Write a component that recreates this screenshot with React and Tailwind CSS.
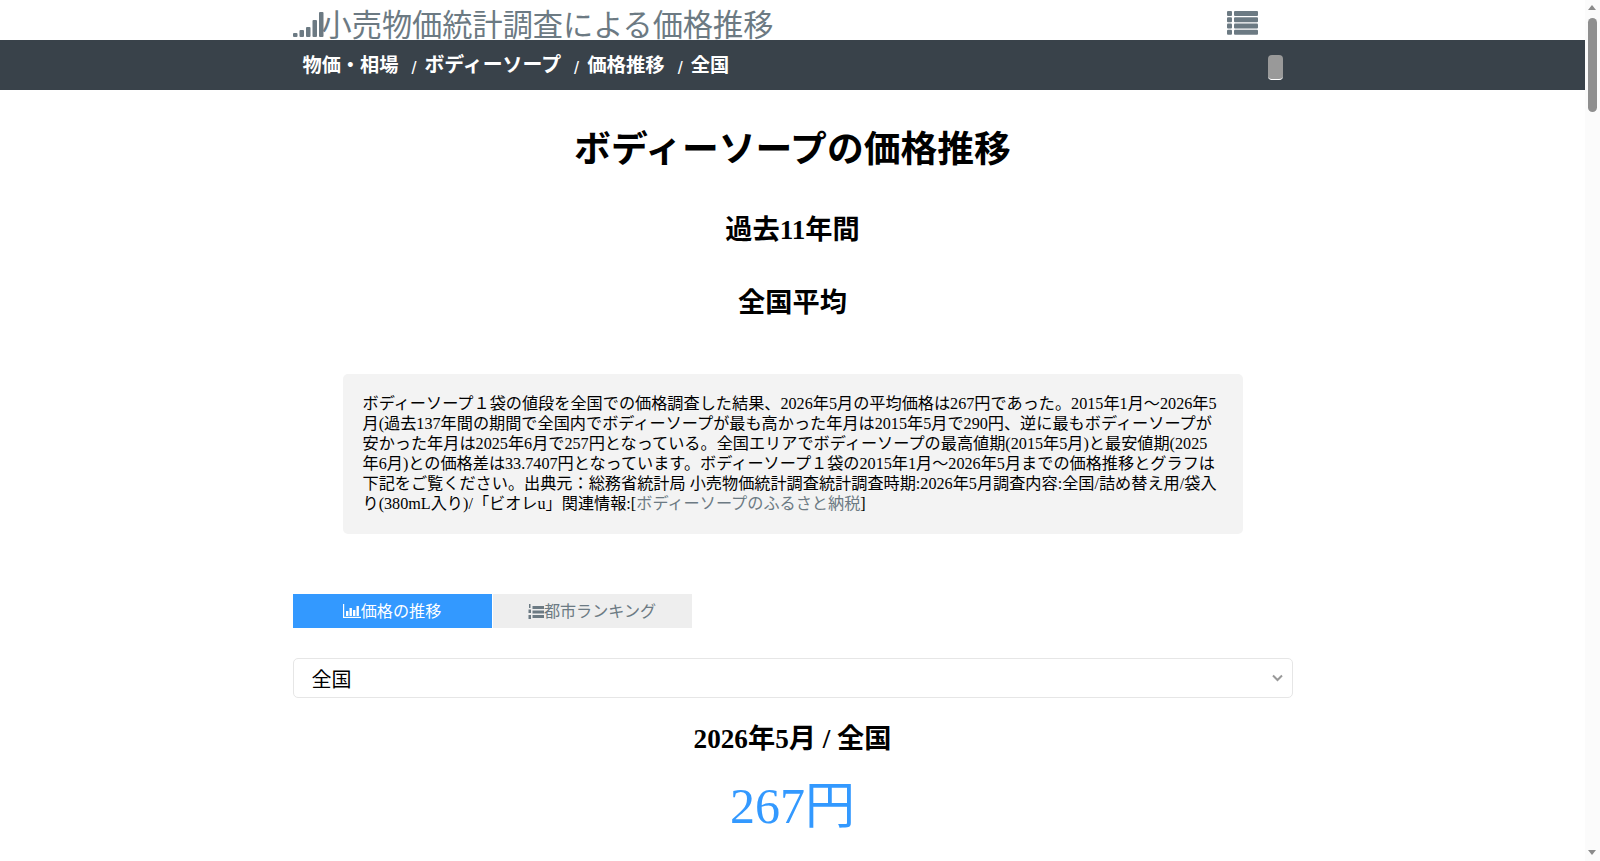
const Sep = () => <span className="text-[18px] font-normal pl-[13px] pr-[8px] relative top-[2px]">/</span>;

const Signal = () => (
  <svg width="31" height="25" viewBox="0 0 31 25" fill="#6c7a83">
    <rect x="0" y="21" width="4.5" height="4" rx="1" />
    <rect x="6.5" y="18" width="4.5" height="7" rx="1" />
    <rect x="13" y="15" width="4.5" height="10" rx="1" />
    <rect x="19.5" y="8" width="4.5" height="17" rx="1" />
    <rect x="26" y="0" width="4.5" height="25" rx="1" />
  </svg>
);

const ListIcon = () => (
  <svg width="31" height="25" viewBox="0 0 31 25" fill="#6c7a83">
    {[0, 6.25, 12.5, 18.75].map((y) => (
      <g key={y}>
        <rect x="0" y={y} width="5" height="5" rx="1" />
        <rect x="7" y={y} width="24" height="5" rx="1" />
      </g>
    ))}
  </svg>
);

const BarIcon = () => (
  <svg width="18" height="14" viewBox="0 0 18 14" fill="#fff">
    <rect x="0" y="0" width="1.2" height="14" />
    <rect x="0" y="12.8" width="18" height="1.2" />
    <rect x="3" y="7" width="2.4" height="5" />
    <rect x="6.5" y="4" width="2.4" height="8" />
    <rect x="10" y="6" width="2.4" height="6" />
    <rect x="13.5" y="2" width="2.4" height="10" />
  </svg>
);

const RankIcon = () => (
  <svg width="16" height="15" viewBox="0 0 16 15" fill="#6c7a83">
    <rect x="1" y="0" width="1.5" height="4" />
    <rect x="0.5" y="5.5" width="2.5" height="3.5" />
    <rect x="0.5" y="11" width="2.5" height="4" />
    <rect x="4.5" y="2" width="11.5" height="3" />
    <rect x="4.5" y="6.5" width="11.5" height="3" />
    <rect x="4.5" y="11" width="11.5" height="3" />
  </svg>
);

export default function App() {
  return (
    <div className="h-[861px] overflow-hidden flex bg-white text-black font-['Liberation_Serif','Noto_Sans_CJK_JP',serif]">
      <div className="flex-1 min-w-0">
        {/* ヘッダー */}
        <div className="h-10 overflow-hidden">
          <div className="w-[1000px] mx-auto flex justify-between font-['Liberation_Sans','Noto_Sans_CJK_JP',sans-serif]">
            <div className="flex items-start text-[#6c7a83] text-[30.2px] leading-[50px] h-[48px]">
              <span className="mt-[12px] shrink-0"><Signal /></span>
              <span className="-ml-[2px] pt-[1px]">小売物価統計調査による価格推移</span>
            </div>
            <div className="mt-[11px] mr-[35px]"><ListIcon /></div>
          </div>
        </div>

        <nav className="h-[50px] bg-[#39424a] text-white font-['Liberation_Sans','Noto_Sans_CJK_JP',sans-serif]">
          <div className="w-[1000px] mx-auto flex items-center h-full pl-[10px] pt-[2px] relative">
            <b className="text-[19.2px] font-bold">物価・相場</b>
            <Sep />
            <b className="text-[19.9px] font-bold">ボディーソープ</b>
            <Sep />
            <b className="text-[19.4px] font-bold">価格推移</b>
            <Sep />
            <b className="text-[19.2px] font-bold">全国</b>
            <div className="absolute left-[975px] top-[15px] w-[15px] h-[25px] rounded-[4px] bg-[#999] border-b border-white" />
          </div>
        </nav>

        <div className="w-[1000px] mx-auto">
          <h1 className="text-[36.8px] font-bold text-center leading-[44px] mt-[38px]">ボディーソープの価格推移</h1>
          <h2 className="text-[27.2px] font-bold text-center leading-[34px] mt-[41px]">過去11年間</h2>
          <h2 className="text-[27.2px] font-bold text-center leading-[34px] mt-[39px]">全国平均</h2>

          <div className="w-[900px] mx-auto mt-[54px] bg-[#f3f3f3] rounded-[5px] px-5 py-5 text-[16.16px] leading-[20px] h-[160px]">
            ボディーソープ１袋の値段を全国での価格調査した結果、2026年5月の平均価格は267円であった。2015年1月～2026年5月(過去137年間の期間で全国内でボディーソープが最も高かった年月は2015年5月で290円、逆に最もボディーソープが安かった年月は2025年6月で257円となっている。全国エリアでボディーソープの最高値期(2015年5月)と最安値期(2025年6月)との価格差は33.7407円となっています。ボディーソープ１袋の2015年1月～2026年5月までの価格推移とグラフは下記をご覧ください。出典元：総務省統計局 小売物価統計調査統計調査時期:2026年5月調査内容:全国/詰め替え用/袋入り(380mL入り)/「ビオレu」関連情報:[<a className="text-[#6c7a83]" href="#">ボディーソープのふるさと納税</a>]
          </div>

          <div className="flex mt-[60px] gap-[1px] font-['Liberation_Sans','Noto_Sans_CJK_JP',sans-serif] text-[16.1px]">
            <div className="w-[199px] h-[34px] bg-[#3399ff] text-white flex items-center justify-center"><BarIcon />価格の推移</div>
            <div className="w-[199px] h-[34px] bg-[#eeeeee] text-[#6c7a83] flex items-center justify-center"><RankIcon />都市ランキング</div>
          </div>

          <div className="mt-[30px] h-10 border border-[#e6e6e6] rounded-[5px] flex items-center justify-between pl-[18px] pr-[9px] text-[20px] font-['Liberation_Sans','Noto_Sans_CJK_JP',sans-serif]">
            <span className="relative top-[2px]">全国</span>
            <svg width="11" height="8" viewBox="0 0 11 8" fill="none" stroke="#999" strokeWidth="2"><path d="M1 1.5 L5.5 6 L10 1.5" /></svg>
          </div>

          <h2 className="text-[27.2px] font-bold text-center leading-[34px] mt-[24px]">2026年5月 / 全国</h2>
          <div className="text-[50px] text-[#3399ff] text-center leading-[60px] mt-[20px]">267円</div>
        </div>
      </div>

      {/* スクロールバー */}
      <div className="w-[15px] bg-[#fbfbfb] relative shrink-0">
        <div className="absolute left-[3px] top-[5px] w-0 h-0 border-l-[4.5px] border-r-[4.5px] border-b-[5px] border-l-transparent border-r-transparent border-b-[#8a8a8a]" />
        <div className="absolute left-[3px] top-[18px] w-[9px] h-[94px] rounded-full bg-[#8f8f8f]" />
        <div className="absolute left-[3px] bottom-[6px] w-0 h-0 border-l-[4.5px] border-r-[4.5px] border-t-[5px] border-l-transparent border-r-transparent border-t-[#8a8a8a]" />
      </div>
    </div>
  );
}
